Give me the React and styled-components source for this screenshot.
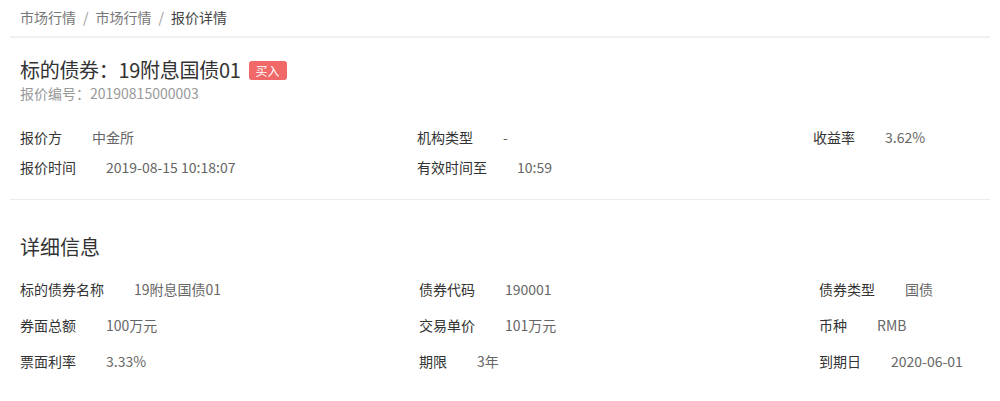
import styled, { createGlobalStyle } from "styled-components";

const GlobalStyle = createGlobalStyle`
  body {
    margin: 0;
    background: #fff;
    font-family: "Noto Sans CJK SC", "Noto Sans", sans-serif;
    color: #333;
  }
`;

const Page = styled.div`
  padding: 0 10px;
`;

// 面包屑
const Breadcrumb = styled.div`
  display: flex;
  align-items: center;
  padding: 7px 10px 9px;
  font-size: 14px;
  line-height: 20px;
  border-bottom: 2px solid #f0f0f0;
`;

const Crumb = styled.span`
  color: ${(props) => (props.$active ? "#444" : "#777")};
`;

const Sep = styled.span`
  color: #999;
  margin: 0 7px;
`;

const Section = styled.div`
  padding: ${(props) => props.$pad || "0 10px"};
  border-bottom: ${(props) => (props.$line ? "1.5px solid #ececec" : "none")};
`;

const TitleRow = styled.div`
  display: flex;
  align-items: center;
`;

const Title = styled.h2`
  margin: 0;
  font-size: 20px;
  font-weight: normal;
  line-height: 26px;
  letter-spacing: -0.3px;
  color: #333;
`;

const Badge = styled.span`
  display: inline-block;
  margin-left: 8px;
  padding: 0 7px;
  height: 19px;
  line-height: 19px;
  font-size: 12px;
  color: #fff;
  background: #f06868;
  border-radius: 3px;
`;

const SubText = styled.div`
  font-size: 14px;
  line-height: 20px;
  color: #999;
`;

const InfoGrid = styled.div`
  display: grid;
  grid-template-columns: ${(props) => props.$cols || "397px 396px 1fr"};
  row-gap: ${(props) => props.$gap || "10px"};
  margin-top: ${(props) => props.$top || "24px"};
`;

const Item = styled.div`
  display: flex;
  font-size: 14px;
  line-height: 20px;
  white-space: nowrap;
`;

const Label = styled.span`
  color: #333;
  margin-right: 30px;
`;

const Value = styled.span`
  color: #666;
`;

const SectionTitle = styled.h3`
  margin: 0;
  font-size: 20px;
  font-weight: normal;
  line-height: 28px;
  color: #333;
`;

const quoteInfo = [
  ["报价方", "中金所"],
  ["机构类型", "-"],
  ["收益率", "3.62%"],
  ["报价时间", "2019-08-15 10:18:07"],
  ["有效时间至", "10:59"],
  null,
];

const detailInfo = [
  ["标的债券名称", "19附息国债01"],
  ["债券代码", "190001"],
  ["债券类型", "国债"],
  ["券面总额", "100万元"],
  ["交易单价", "101万元"],
  ["币种", "RMB"],
  ["票面利率", "3.33%"],
  ["期限", "3年"],
  ["到期日", "2020-06-01"],
];

function renderItems(list) {
  return list.map((it, i) =>
    it ? (
      <Item key={i}>
        <Label>{it[0]}</Label>
        <Value>{it[1]}</Value>
      </Item>
    ) : (
      <div key={i} />
    )
  );
}

export default function App() {
  return (
    <Page>
      <GlobalStyle />
      <Breadcrumb>
        <Crumb>市场行情</Crumb>
        <Sep>/</Sep>
        <Crumb>市场行情</Crumb>
        <Sep>/</Sep>
        <Crumb $active>报价详情</Crumb>
      </Breadcrumb>

      <Section $pad="19px 10px 22px" $line>
        <TitleRow>
          <Title>标的债券：19附息国债01</Title>
          <Badge>买入</Badge>
        </TitleRow>
        <SubText>报价编号：20190815000003</SubText>
        <InfoGrid>{renderItems(quoteInfo)}</InfoGrid>
      </Section>

      <Section $pad="33px 10px 20px">
        <SectionTitle>详细信息</SectionTitle>
        <InfoGrid $cols="399px 400px 1fr" $top="18px" $gap="16px">
          {renderItems(detailInfo)}
        </InfoGrid>
      </Section>
    </Page>
  );
}
